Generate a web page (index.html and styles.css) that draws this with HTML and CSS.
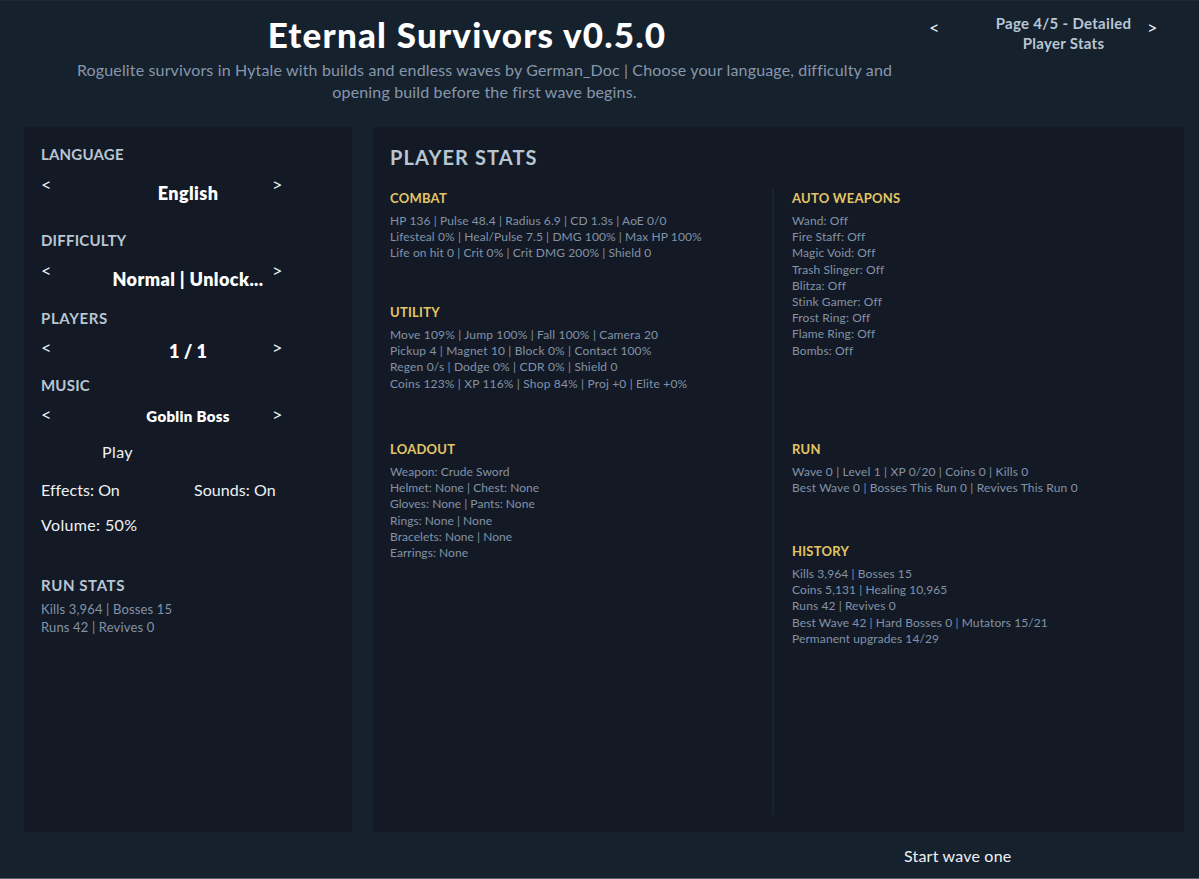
FILE: index.html
```
<!DOCTYPE html>
<html lang="en">
<head>
    <meta charset="UTF-8">
    <meta name="viewport" content="width=device-width, initial-scale=1.0">
    <title>Eternal Survivors v0.5.0</title>
    <link rel="stylesheet" href="styles.css">
</head>
<body>
    <header class="header">
        <div class="intro">
            <h1>Eternal Survivors v0.5.0</h1>
            <p>Roguelite survivors in Hytale with builds and endless waves by German_Doc | Choose your language, difficulty and</p>
            <p>opening build before the first wave begins.</p>
        </div>
        <div class="pager">
            <button class="arrow">&lt;</button>
            <div class="page-name">Page 4/5 - Detailed<br>Player Stats</div>
            <button class="arrow">&gt;</button>
        </div>
    </header>

    <main class="content">
        <aside class="panel sidebar">
            <section class="option language">
                <h2>LANGUAGE</h2>
                <div class="picker">
                    <button class="arrow">&lt;</button>
                    <div class="value">English</div>
                    <button class="arrow">&gt;</button>
                </div>
            </section>
            <section class="option difficulty">
                <h2>DIFFICULTY</h2>
                <div class="picker">
                    <button class="arrow">&lt;</button>
                    <div class="value">Normal | Unlock...</div>
                    <button class="arrow">&gt;</button>
                </div>
            </section>
            <section class="option players">
                <h2>PLAYERS</h2>
                <div class="picker">
                    <button class="arrow">&lt;</button>
                    <div class="value">1 / 1</div>
                    <button class="arrow">&gt;</button>
                </div>
            </section>
            <section class="option music">
                <h2>MUSIC</h2>
                <div class="picker">
                    <button class="arrow">&lt;</button>
                    <div class="value">Goblin Boss</div>
                    <button class="arrow">&gt;</button>
                </div>
            </section>
            <button class="play">Play</button>
            <div class="toggles">
                <button>Effects: On</button>
                <button>Sounds: On</button>
            </div>
            <button class="volume">Volume: 50%</button>
            <section class="run-stats">
                <h2>RUN STATS</h2>
                <p>Kills 3,964 | Bosses 15</p>
                <p>Runs 42 | Revives 0</p>
            </section>
        </aside>

        <section class="panel stats">
            <h2 class="stats-title">PLAYER STATS</h2>
            <div class="columns">
                <div class="column">
                    <div class="group combat">
                        <h3>COMBAT</h3>
                        <p>HP 136 | Pulse 48.4 | Radius 6.9 | CD 1.3s | AoE 0/0</p>
                        <p>Lifesteal 0% | Heal/Pulse 7.5 | DMG 100% | Max HP 100%</p>
                        <p>Life on hit 0 | Crit 0% | Crit DMG 200% | Shield 0</p>
                    </div>
                    <div class="group utility">
                        <h3>UTILITY</h3>
                        <p>Move 109% | Jump 100% | Fall 100% | Camera 20</p>
                        <p>Pickup 4 | Magnet 10 | Block 0% | Contact 100%</p>
                        <p>Regen 0/s | Dodge 0% | CDR 0% | Shield 0</p>
                        <p>Coins 123% | XP 116% | Shop 84% | Proj +0 | Elite +0%</p>
                    </div>
                    <div class="group loadout">
                        <h3>LOADOUT</h3>
                        <p>Weapon: Crude Sword</p>
                        <p>Helmet: None | Chest: None</p>
                        <p>Gloves: None | Pants: None</p>
                        <p>Rings: None | None</p>
                        <p>Bracelets: None | None</p>
                        <p>Earrings: None</p>
                    </div>
                </div>
                <div class="column">
                    <div class="group weapons">
                        <h3>AUTO WEAPONS</h3>
                        <p>Wand: Off</p>
                        <p>Fire Staff: Off</p>
                        <p>Magic Void: Off</p>
                        <p>Trash Slinger: Off</p>
                        <p>Blitza: Off</p>
                        <p>Stink Gamer: Off</p>
                        <p>Frost Ring: Off</p>
                        <p>Flame Ring: Off</p>
                        <p>Bombs: Off</p>
                    </div>
                    <div class="group run">
                        <h3>RUN</h3>
                        <p>Wave 0 | Level 1 | XP 0/20 | Coins 0 | Kills 0</p>
                        <p>Best Wave 0 | Bosses This Run 0 | Revives This Run 0</p>
                    </div>
                    <div class="group">
                        <h3>HISTORY</h3>
                        <p>Kills 3,964 | Bosses 15</p>
                        <p>Coins 5,131 | Healing 10,965</p>
                        <p>Runs 42 | Revives 0</p>
                        <p>Best Wave 42 | Hard Bosses 0 | Mutators 15/21</p>
                        <p>Permanent upgrades 14/29</p>
                    </div>
                </div>
            </div>
        </section>
    </main>

    <footer class="footer">
        <button class="start">Start wave one</button>
    </footer>
</body>
</html>
```
FILE: styles.css
```
* {
    box-sizing: border-box;
}

body {
    margin: 0;
    height: 879px;
    display: flex;
    flex-direction: column;
    overflow: hidden;
    font-family: 'Lato', sans-serif;
    background: #16212e;
    color: #f4f7fa;
    border-top: 1px solid #1e2a37;
    border-bottom: 1px solid #55616d;
}

h1, h2, h3, p {
    margin: 0;
    white-space: nowrap;
}

button {
    padding: 0;
    border: none;
    background: none;
    color: #eef2f6;
    font-family: inherit;
    font-size: 16px;
    letter-spacing: 0.2px;
    line-height: 20px;
    text-align: left;
    white-space: nowrap;
    cursor: pointer;
}

/* Header */
.header {
    height: 126px;
    display: flex;
}

.intro {
    width: 934px;
    padding-top: 10px;
    text-align: center;
}

h1 {
    margin-bottom: 2px;
    font-size: 35px;
    font-weight: 900;
    letter-spacing: 1.2px;
    line-height: 46px;
    color: #fff;
}

.intro p {
    padding-left: 35px;
    font-size: 16px;
    letter-spacing: 0.15px;
    line-height: 22px;
    color: #8797ab;
}

.pager {
    flex: 1;
    padding: 12px 42px 0 0;
    margin-left: -5px;
    display: flex;
}

.page-name {
    flex: 1;
    padding-left: 41px;
    text-align: center;
    font-size: 15px;
    font-weight: bold;
    letter-spacing: 0.3px;
    line-height: 20px;
    white-space: nowrap;
    color: #b8c6d3;
}

.arrow {
    width: 10px;
    height: 20px;
    font-size: 18px;
    letter-spacing: 0;
}

.pager .arrow {
    margin-top: 4px;
}

/* Panels */
.content {
    height: 705px;
    display: flex;
    gap: 21px;
    padding: 0 15px 0 24px;
}

.panel {
    padding: 17px;
    background: #131a25;
}

.sidebar {
    width: 328px;
}

.sidebar h2 {
    font-size: 15px;
    letter-spacing: 0.2px;
    line-height: 20px;
    color: #b8c6d3;
}

.sidebar .players h2,
.sidebar .run-stats h2 {
    letter-spacing: 0.6px;
}

.option {
    width: 241px;
}

.language {
    height: 86px;
}

.difficulty {
    height: 78px;
}

.players, .music {
    height: 67px;
}

.picker {
    display: flex;
    padding-top: 10px;
}

.players .picker, .music .picker {
    padding-top: 9px;
}

.value {
    flex: 1;
    padding: 9px 0 0 53px;
    text-align: center;
    font-size: 18px;
    font-weight: 800;
    letter-spacing: 0.4px;
    line-height: 20px;
    white-space: nowrap;
    color: #fff;
}

.players .value {
    padding-top: 4px;
    letter-spacing: 0;
}

.music .value {
    padding-top: 2px;
    font-size: 15px;
    letter-spacing: 0.3px;
}

.play {
    display: block;
    margin-left: 61px;
    letter-spacing: 0.4px;
}

.toggles {
    display: grid;
    grid-template-columns: 153px 1fr;
    margin: 18px 0 15px;
}

.toggles button {
    letter-spacing: 0.05px;
}

.volume {
    display: block;
    letter-spacing: 0.35px;
}

.run-stats {
    margin-top: 40px;
}

.run-stats h2 {
    margin-bottom: 6px;
}

.run-stats p {
    font-size: 13px;
    letter-spacing: 0.15px;
    line-height: 17.5px;
    color: #8292a8;
}

/* Player stats */
.stats {
    flex: 1;
    display: flex;
    flex-direction: column;
}

.stats-title {
    margin: 3px 0 22px;
    font-size: 20px;
    letter-spacing: 1.1px;
    line-height: 20px;
    color: #b8c6d3;
}

.columns {
    flex: 1;
    display: grid;
    grid-template-columns: 382px 1fr;
}

.column + .column {
    padding-left: 18px;
    border-left: 2px solid #1b232f;
}

.group h3 {
    margin-bottom: 6px;
    font-size: 13px;
    letter-spacing: 0.25px;
    line-height: 18px;
    color: #e3c565;
}

.group p {
    font-size: 12px;
    letter-spacing: 0.09px;
    line-height: 16.2px;
    color: #8292a8;
}

.combat {
    height: 114px;
}

.utility {
    height: 137px;
}

.utility p, .run p {
    letter-spacing: 0.16px;
}

.loadout p {
    letter-spacing: 0.04px;
}

.weapons {
    height: 251px;
}

.run {
    height: 102px;
}

/* Footer */
.footer {
    padding: 14px 0 0 904px;
}
```
